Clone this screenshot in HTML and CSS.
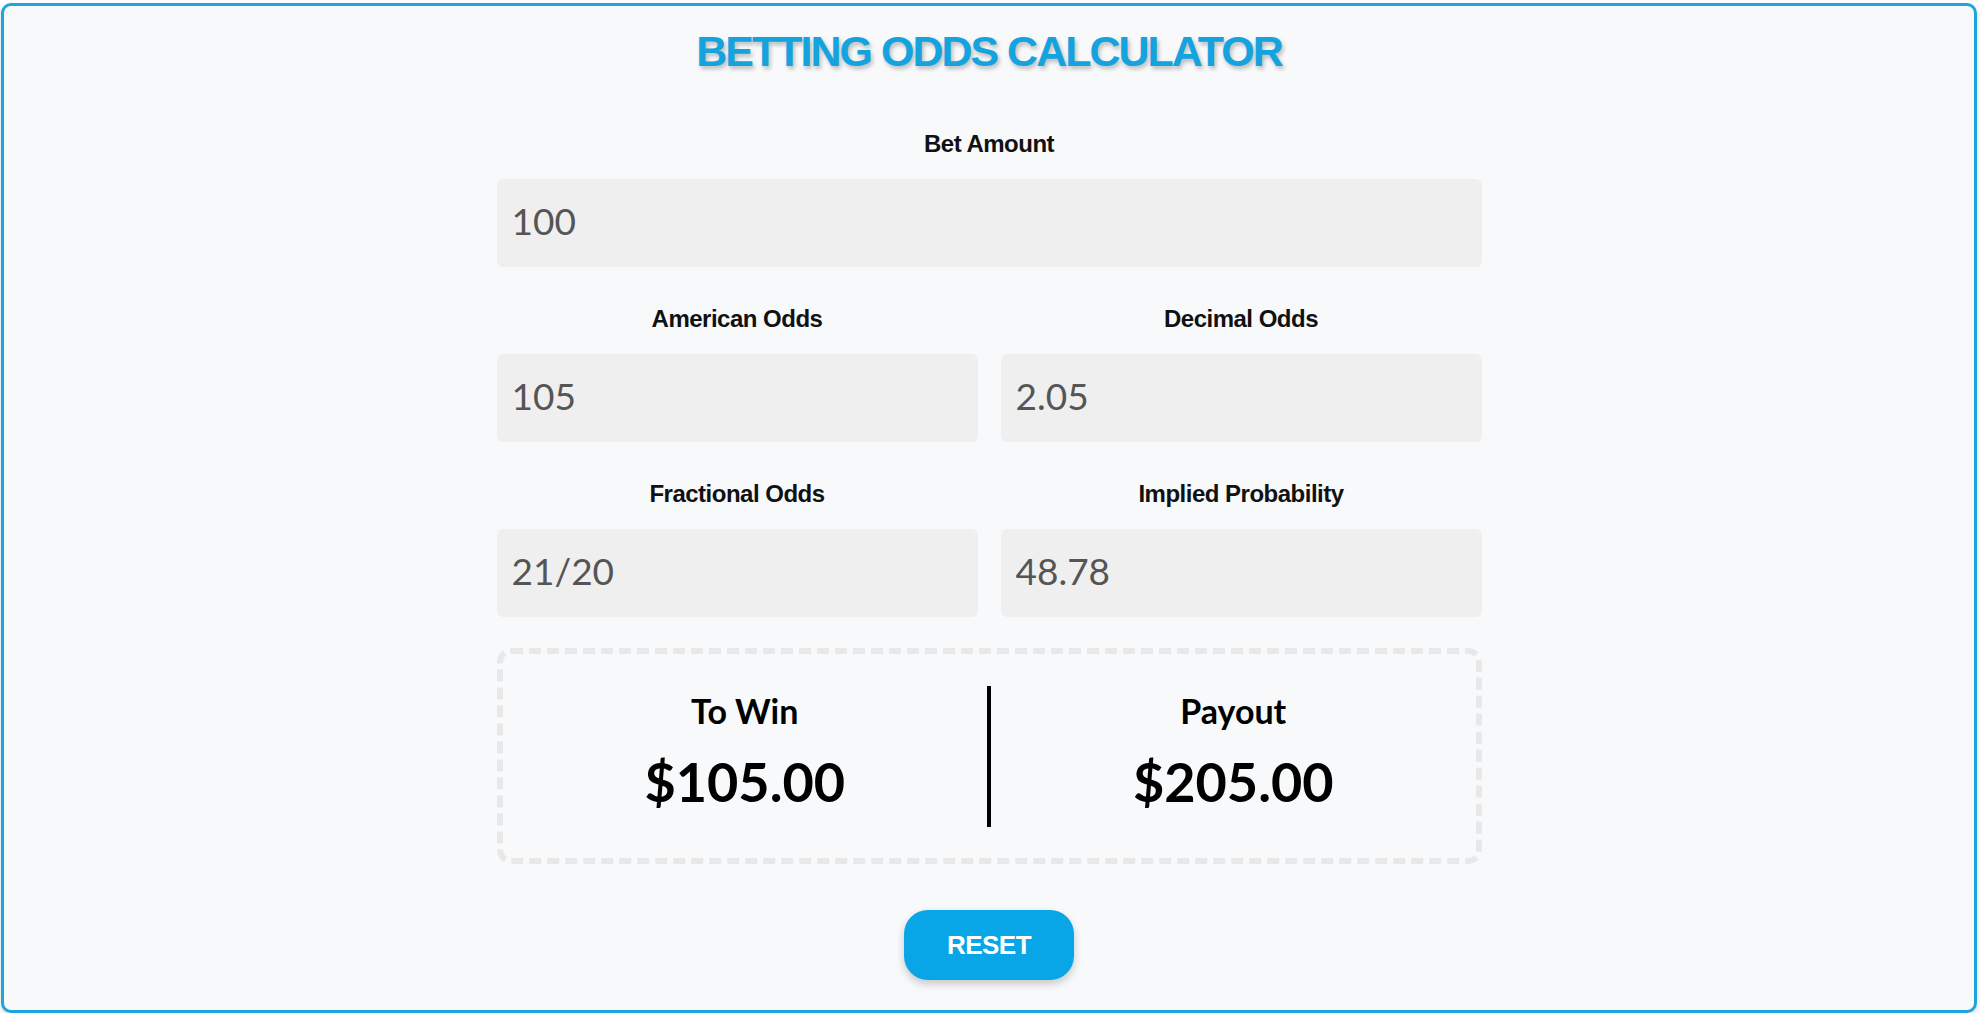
FILE: index.html
```html
<!DOCTYPE html>
<html lang="en">
<head>
<meta charset="UTF-8">
<meta name="viewport" content="width=device-width, initial-scale=1.0">
<title>Betting Odds Calculator</title>
<link rel="stylesheet" href="styles.css">
</head>
<body>
<div class="calculator">
  <h1>BETTING ODDS CALCULATOR</h1>

  <div class="form">
    <div class="field">
      <label for="betAmount">Bet Amount</label>
      <input type="text" id="betAmount" value="100">
    </div>

    <div class="row">
      <div class="field">
        <label for="american">American Odds</label>
        <input type="text" id="american" value="105">
      </div>
      <div class="field">
        <label for="decimal">Decimal Odds</label>
        <input type="text" id="decimal" value="2.05">
      </div>
    </div>

    <div class="row">
      <div class="field">
        <label for="fractional">Fractional Odds</label>
        <input type="text" id="fractional" value="21/20">
      </div>
      <div class="field">
        <label for="probability">Implied Probability</label>
        <input type="text" id="probability" value="48.78">
      </div>
    </div>

    <div class="results">
      <div class="result">
        <div class="result-label">To Win</div>
        <div class="result-value" id="toWin">$105.00</div>
      </div>
      <div class="divider"></div>
      <div class="result">
        <div class="result-label">Payout</div>
        <div class="result-value" id="payout">$205.00</div>
      </div>
    </div>
  </div>

  <button class="reset-btn" id="resetBtn">RESET</button>
</div>

<script>
// recalculate everything from the american odds line
function update() {
  const bet = parseFloat(document.getElementById('betAmount').value) || 0;
  const us = parseFloat(document.getElementById('american').value);
  if (!us) return;
  const dec = us > 0 ? 1 + us / 100 : 1 + 100 / Math.abs(us);
  document.getElementById('decimal').value = dec.toFixed(2);
  document.getElementById('probability').value = (100 / dec).toFixed(2);
  document.getElementById('toWin').textContent = '$' + (bet * (dec - 1)).toFixed(2);
  document.getElementById('payout').textContent = '$' + (bet * dec).toFixed(2);
}

document.getElementById('betAmount').addEventListener('input', update);
document.getElementById('american').addEventListener('input', update);

document.getElementById('resetBtn').addEventListener('click', function() {
  document.querySelectorAll('.field input').forEach(input => input.value = '');
  document.getElementById('toWin').textContent = '$0.00';
  document.getElementById('payout').textContent = '$0.00';
});
</script>
</body>
</html>
```

FILE: styles.css
```css
body {
  margin: 0;
  padding: 0;
  background-color: #ffffff;
  font-family: "Liberation Sans", Arial, sans-serif;
}

.calculator {
  margin: 3px 3px 0 1px;
  height: 1010px;
  box-sizing: border-box;
  padding: 18px 0 28px;
  border: 3px solid #1fa5dd;
  border-radius: 10px;
  background-color: #f7f9fb;
  box-shadow: 0 3px 6px rgba(0, 0, 0, 0.15);
  display: flex;
  flex-direction: column;
  align-items: center;
}

h1 {
  margin: 0 0 49px;
  font-size: 43px;
  line-height: 55px;
  font-weight: bold;
  letter-spacing: -2px;
  color: #14a3df;
  text-shadow: 2px 3px 4px rgba(0, 0, 0, 0.25);
}

.form {
  width: 985px;
  display: flex;
  flex-direction: column;
  gap: 36px;
}

.row {
  display: grid;
  grid-template-columns: 1fr 1fr;
  column-gap: 23px;
}

.field label {
  display: block;
  margin-bottom: 20px;
  text-align: center;
  font-size: 24px;
  line-height: 31px;
  font-weight: bold;
  letter-spacing: -0.5px;
  color: #111;
}

.field input {
  display: block;
  width: 100%;
  height: 88px;
  box-sizing: border-box;
  padding: 0 15px 6px;
  border: none;
  border-radius: 6px;
  background-color: #efefef;
  font-family: Lato, "Open Sans", sans-serif;
  font-size: 37px;
  color: #555;
  outline: none;
}

.results {
  margin-top: -5px;
  height: 216px;
  box-sizing: border-box;
  border: 6px dashed #e8e8e8;
  border-radius: 14px;
  display: flex;
  align-items: center;
}

.result {
  flex: 1;
  margin-bottom: 6px;
  text-align: center;
  font-family: Lato, "Open Sans", sans-serif;
  font-weight: bold;
  color: #000;
}

.result-label {
  font-size: 34px;
  line-height: 1.2;
  margin-bottom: 18px;
}

.result-value {
  font-size: 54px;
  line-height: 1.2;
}

.divider {
  width: 4px;
  height: 141px;
  background-color: #000;
}

.reset-btn {
  margin-top: 46px;
  width: 170px;
  height: 70px;
  border: none;
  border-radius: 24px;
  background-color: #08a6e6;
  color: white;
  font-family: "Liberation Sans", Arial, sans-serif;
  font-size: 26px;
  font-weight: bold;
  letter-spacing: -0.5px;
  box-shadow: 0 4px 8px rgba(0, 0, 0, 0.2);
  cursor: pointer;
}
```
